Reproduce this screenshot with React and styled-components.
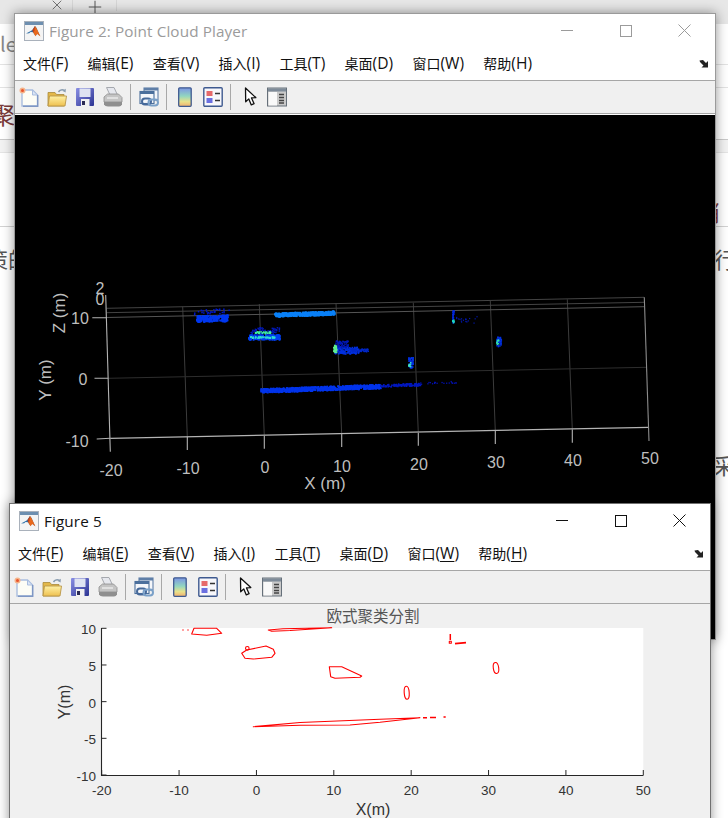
import React from 'react';
import styled, { createGlobalStyle } from 'styled-components';
import { X, Plus } from 'lucide-react';

const GlobalStyle = createGlobalStyle`
  html, body { margin: 0; padding: 0; width: 728px; height: 818px; overflow: hidden; background: #fff; }
  #root { width: 728px; height: 818px; }
`;

const Desktop = styled.div`
  position: relative;
  width: 728px;
  height: 818px;
  overflow: hidden;
  font-family: "Noto Sans CJK SC", "Liberation Sans", sans-serif;
`;

/* ---- the web page behind the figure windows ---- */
const Backdrop = styled.div`
  display: flex;
  flex-direction: column;
  width: 100%;
  height: 100%;
`;
const TabBar = styled.div`
  height: 24px;
  flex: none;
  background: #e7e7e7;
  display: flex;
  align-items: flex-start;
  color: #555;
`;
const TabSlot = styled.div`
  width: ${p => p.$w}px;
  height: 11px;
  display: flex;
  justify-content: ${p => p.$end ? 'flex-end' : 'center'};
  padding-right: ${p => p.$pad || 0}px;
  box-sizing: border-box;
  border-right: 1px solid #d6d6d6;
  svg { margin-top: -3px; flex: none; }
`;
const PageRow = styled.div`
  height: ${p => p.$h}px;
  flex: none;
  display: flex;
  justify-content: space-between;
  align-items: ${p => p.$align || 'center'};
  box-sizing: border-box;
  background: ${p => p.$bg || '#fff'};
  border-bottom: ${p => p.$line ? `1px solid ${p.$line}` : '0'};
  overflow: hidden;
  font-size: ${p => p.$size || 22}px;
  line-height: 1.3;
  color: ${p => p.$color || '#555'};
`;
const Clipped = styled.span`
  margin-left: ${p => p.$ml || 0}px;
  margin-right: ${p => p.$mr || 0}px;
  white-space: nowrap;
`;

/* ---- figure windows ---- */
const Win = styled.section`
  position: absolute;
  left: ${p => p.$x}px;
  top: ${p => p.$y}px;
  width: 702px;
  height: ${p => p.$h}px;
  box-sizing: border-box;
  border: 1px solid ${p => p.$active ? '#707070' : '#9a9a9a'};
  background: #f0f0f0;
  box-shadow: 0 0 11px rgba(0,0,0,.42);
  display: flex;
  flex-direction: column;
  overflow: hidden;
`;
const TitleBar = styled.header`
  height: 33px;
  flex: none;
  display: flex;
  align-items: center;
  background: #fff;
  padding-left: 9px;
`;
const TitleText = styled.span`
  margin-left: 5px;
  font-family: "Open Sans", "Noto Sans", sans-serif;
  font-size: 15.3px;
  letter-spacing: .1px;
  color: ${p => p.$active ? '#111' : '#9b9b9b'};
  flex: 1;
`;
const Caption = styled.button`
  all: unset;
  width: 59px;
  height: 33px;
  display: flex;
  align-items: center;
  justify-content: center;
  flex: none;
  color: ${p => p.$active ? '#111' : '#9b9b9b'};
`;
const Captions = styled.div`
  display: flex;
  margin-right: 1px;
`;
const MenuBar = styled.nav`
  height: 34px;
  flex: none;
  box-sizing: border-box;
  display: flex;
  align-items: center;
  gap: 19.3px;
  padding: 0 6px 2px 8px;
  background: #fff;
  border-bottom: 1px solid #a6a6a6;
  font-size: 14px;
  color: #111;
`;
const MenuItem = styled.span`
  white-space: nowrap;
  display: flex;
  align-items: baseline;
  u { text-underline-offset: 2px; }
`;
const MenuKey = styled.span`
  font-family: "Open Sans", "Noto Sans", sans-serif;
  font-size: 15.6px;
`;
const MenuEnd = styled.span`
  margin-left: auto;
  display: flex;
  margin-top: 2px;
`;
const ToolBar = styled.div`
  height: 33px;
  flex: none;
  box-sizing: border-box;
  display: flex;
  align-items: center;
  background: #f0f0f0;
  border-bottom: 1px solid #a6a6a6;
`;
const ToolSlot = styled.span`
  width: ${p => p.$w || 28}px;
  height: 22px;
  flex: none;
  display: flex;
  align-items: center;
  justify-content: center;
`;
const ToolSep = styled.i`
  width: 1px;
  height: 26px;
  flex: none;
  background: #a8a8a8;
  margin: 0 ${p => p.$after || 4}px 0 3px;
`;
const Canvas = styled.div`
  flex: 1;
  min-height: 0;
  background: ${p => p.$bg};
  border-top: ${p => p.$gap ? '1px solid #fff' : '0'};
`;
const Plot = styled.svg`
  display: block;
  width: 700px;
  height: ${p => p.$h}px;
`;
const Tick3D = styled.text`
  font-family: "Liberation Sans", Arial, sans-serif;
  font-size: ${p => p.$size || 16}px;
  fill: #bebebe;
  text-anchor: middle;
`;
const Tick2D = styled.text`
  font-family: "Liberation Sans", Arial, sans-serif;
  font-size: 13.5px;
  fill: #333;
  text-anchor: ${p => p.$anchor || 'middle'};
`;
const Label2D = styled.text`
  font-family: "Liberation Sans", Arial, sans-serif;
  font-size: 16px;
  fill: #333;
  text-anchor: middle;
`;
const PlotTitle = styled.text`
  font-family: "Noto Sans CJK SC", sans-serif;
  font-size: 15.5px;
  fill: #555;
  text-anchor: middle;
`;

/* ---- drawn icons ---- */
const MatlabLogo = () => (
  <svg width="20" height="20" viewBox="0 0 20 20">
    <rect x=".5" y=".5" width="19" height="19" fill="#f4f4f4" stroke="#a9b1bb" />
    <rect x="1" y="1" width="18" height="3" fill="#6d8fb0" />
    <path d="M2 12.5l4.3-2.3 2-1.2L11 5l1.5 2 3.5 8-3-2.5-1.7 2.3-2.3-3.6-2.4-.2-1.5 1.2z" fill="#2d6fa8" />
    <path d="M11 5l1.6 2.3L16.500 15.500l-3.300-2.500-1.700 2.300L9 11z" fill="#e8681c" />
    <path d="M8.500 9L11 5l-.6 4.700L9 11.500z" fill="#c1401a" />
  </svg>
);
const IconNew = () => (
  <svg width="20" height="20" viewBox="0 0 20 20">
    <path d="M3 3h10.500l5 5v11H3z" fill="#fdfdf6" stroke="#a9bddf" strokeWidth="1.400" />
    <path d="M13.500 3v5h5z" fill="#dbe5f5" stroke="#a9bddf" />
    <path d="M18.700 8v11.300H4" fill="none" stroke="#7f97c4" strokeWidth="1.400" />
    <circle cx="3.500" cy="3.500" r="3" fill="#f5b48a" />
    <circle cx="3.500" cy="3.500" r="1.500" fill="#e8542c" />
  </svg>
);
const IconOpen = () => (
  <svg width="20" height="20" viewBox="0 0 20 20">
    <defs>
      <linearGradient id="fo" x1="0" y1="0" x2="0" y2="1">
        <stop offset="0" stopColor="#fff2a6" /><stop offset="1" stopColor="#eec04f" />
      </linearGradient>
    </defs>
    <path d="M1 5.500h7l1.500 2H17V19H1z" fill="#e3b84a" stroke="#a88a3a" strokeWidth=".8" />
    <path d="M1 19l1.500-10h17L18 19z" fill="url(#fo)" stroke="#b9964a" strokeWidth=".9" />
    <path d="M11.500 5c1.300-2.200 4-2.600 6-1.600" fill="none" stroke="#8a9db0" strokeWidth="1.500" />
    <path d="M18.800 1.800l-.2 3.600-3-1.400z" fill="#8a9db0" />
  </svg>
);
const IconSave = () => (
  <svg width="20" height="20" viewBox="0 0 20 20">
    <defs>
      <linearGradient id="fl" x1="0" y1="0" x2="1" y2="1">
        <stop offset="0" stopColor="#8a8fe4" /><stop offset="1" stopColor="#2b3392" />
      </linearGradient>
    </defs>
    <rect x="1" y="1" width="18" height="18" rx="1" fill="url(#fl)" />
    <rect x="4.500" y="1.500" width="11" height="8.500" fill="#dfe3f2" />
    <rect x="6" y="12" width="8.500" height="7" fill="#f1f1f1" />
    <rect x="7" y="14" width="3" height="4" fill="#2b2b55" />
  </svg>
);
const IconPrint = () => (
  <svg width="20" height="20" viewBox="0 0 20 20">
    <path d="M3.500 .5h7.500l3.500 7.500H7z" fill="#e6e8ee" stroke="#a5a8ae" />
    <path d="M1 10l3.500-3h11l3.500 3.500V15H1z" fill="#c4c4c4" stroke="#8d8d8d" strokeWidth=".8" />
    <path d="M1 15h18v2.500q-1 2-3 2H5q-3 0-4-2z" fill="#8f8f8f" />
    <path d="M4 11h11" stroke="#ededed" strokeWidth="1.400" />
  </svg>
);
const IconLink = () => (
  <svg width="20" height="20" viewBox="0 0 20 20">
    <rect x="5" y="1" width="14" height="12" fill="#f4f6fa" stroke="#5f7fa8" strokeWidth="1.100" />
    <rect x="5" y="1" width="14" height="2.500" fill="#5f7fa8" />
    <rect x="1" y="4.500" width="14" height="12" fill="#f4f6fa" stroke="#4b6f9c" strokeWidth="1.100" />
    <rect x="1" y="4.500" width="14" height="2.500" fill="#4b6f9c" />
    <rect x="3" y="11.500" width="9" height="6" rx="3" fill="none" stroke="#46699a" strokeWidth="2" />
    <rect x="9.500" y="12.500" width="9.500" height="6" rx="3" fill="none" stroke="#7aa0c8" strokeWidth="2" />
  </svg>
);
const IconColorbar = () => (
  <svg width="20" height="20" viewBox="0 0 20 20">
    <defs>
      <linearGradient id="cb" x1="0" y1="0" x2="0" y2="1">
        <stop offset="0" stopColor="#7c94e4" /><stop offset=".45" stopColor="#92d6c0" />
        <stop offset=".75" stopColor="#e9e28a" /><stop offset="1" stopColor="#f0b070" />
      </linearGradient>
    </defs>
    <rect x="3.700" y=".8" width="12.500" height="18.500" rx="1" fill="url(#cb)" stroke="#3f5a90" strokeWidth="1.300" />
  </svg>
);
const IconLegend = () => (
  <svg width="20" height="20" viewBox="0 0 20 20">
    <rect x=".8" y=".8" width="18.400" height="18.400" rx="1" fill="#f7f7fb" stroke="#3f5a90" strokeWidth="1.400" />
    <rect x="3.500" y="4" width="6" height="5" fill="#e6696a" />
    <rect x="3.500" y="11" width="6" height="5" fill="#6a6fe0" />
    <path d="M12 6.500h5M12 13.500h5" stroke="#333" strokeWidth="1.500" />
  </svg>
);
const IconArrow = () => (
  <svg width="20" height="20" viewBox="0 0 20 20">
    <path d="M4.500 1l.2 13.800 3.100-2.900 2.500 6 2.800-1.200-2.600-5.800 4.300-.3z" fill="#fff" stroke="#111" strokeWidth="1.300" strokeLinejoin="round" />
  </svg>
);
const IconPanel = () => (
  <svg width="20" height="20" viewBox="0 0 20 20">
    <rect x=".5" y="1" width="19" height="18" fill="#c9c9c9" stroke="#66707a" />
    <rect x="1" y="1.500" width="18" height="3" fill="#7e8b99" />
    <rect x="1.500" y="5" width="8.500" height="13.500" fill="#f9f9f9" />
    <path d="M12 7.500h5M12 10.500h5M12 13.500h5M12 16h5" stroke="#444" strokeWidth="1.300" />
  </svg>
);
const IconCornerArrow = () => (
  <svg width="10" height="9" viewBox="0 0 10 9">
    <path d="M.5 1.500L4 1l3 3 2-2v6.500H2.500l2-2L1 3z" fill="#222" />
  </svg>
);
const MinGlyph = () => <svg width="12" height="12" viewBox="0 0 12 12"><path d="M0 5.500h12" stroke="currentColor" /></svg>;
const MaxGlyph = () => <svg width="12" height="12" viewBox="0 0 12 12"><rect x=".5" y=".5" width="11" height="11" fill="none" stroke="currentColor" /></svg>;
const CloseGlyph = () => <svg width="13" height="13" viewBox="0 0 13 13"><path d="M.5.500l12 12M12.500.500l-12 12" stroke="currentColor" /></svg>;

/* ---- 3D point cloud ---- */
const rng = seed => () => {
  seed = (seed + 0x6d2b79f5) | 0;
  let t = Math.imul(seed ^ (seed >>> 15), 1 | seed);
  t = (t + Math.imul(t ^ (t >>> 7), 61 | t)) ^ t;
  return ((t ^ (t >>> 14)) >>> 0) / 4294967296;
};
const clusters = [
  { x: 191, y: 310, w: 38, h: 5, n: 30, c: '#0018c8', s: 1.5, sk: -.07 },
  { x: 196, y: 315, w: 31, h: 6, n: 260, c: '#0038f0', s: 1.9, sk: -.02 },
  { x: 274, y: 312.500, w: 60, h: 3.500, n: 420, c: '#0a80f8', s: 1.9, sk: -.035 },
  { x: 248, y: 334, w: 31, h: 5, n: 220, c: '#0040f0', s: 1.800, sk: 0 },
  { x: 250, y: 327, w: 29, h: 7, n: 70, c: '#0018b8', s: 1.500, sk: 0 },
  { x: 254, y: 331, w: 16, h: 2, n: 30, c: '#40f0a0', s: 1.5, sk: 0 },
  { x: 250, y: 336, w: 24, h: 1.500, n: 40, c: '#30e0d0', s: 1.500, sk: 0 },
  { x: 334, y: 346, w: 24, h: 7, n: 170, c: '#0030e0', s: 1.600, sk: .02 },
  { x: 335, y: 340, w: 13, h: 7, n: 60, c: '#0018b8', s: 1.500, sk: 0 },
  { x: 350, y: 348, w: 18, h: 3, n: 50, c: '#0028c8', s: 1.5, sk: 0 },
  { x: 333, y: 344, w: 3, h: 7, n: 30, c: '#60f090', s: 1.600, sk: .5 },
  { x: 260, y: 388, w: 120, h: 4, n: 750, c: '#0034ec', s: 1.800, sk: -.036 },
  { x: 380, y: 384, w: 40, h: 2.500, n: 110, c: '#0018c0', s: 1.500, sk: -.036 },
  { x: 420, y: 382, w: 38, h: 2, n: 20, c: '#0010b0', s: 1.300, sk: -.036 },
  { x: 408, y: 357, w: 4.500, h: 10, n: 50, c: '#0030e0', s: 1.600, sk: 0 },
  { x: 408, y: 362, w: 2, h: 4, n: 10, c: '#40e0c0', s: 1.500, sk: 0 },
  { x: 452, y: 310, w: 1.500, h: 13, n: 24, c: '#0028e0', s: 1.500, sk: 0 },
  { x: 452, y: 319, w: 1.500, h: 3, n: 5, c: '#20e0c0', s: 1.500, sk: 0 },
  { x: 456, y: 316, w: 25, h: 7, n: 18, c: '#0018b0', s: 1.200, sk: 0 },
  { x: 496, y: 336, w: 5, h: 10, n: 40, c: '#0030e0', s: 1.500, sk: 0 },
  { x: 496, y: 339, w: 2, h: 5, n: 10, c: '#30e0b0', s: 1.500, sk: 0 },
];
const cloudDots = clusters.flatMap((c, i) => {
  const r = rng(i * 97 + 11);
  return Array.from({ length: c.n }, () => {
    const x = c.x + r() * c.w;
    const y = c.y + r() * c.h + (x - c.x) * c.sk;
    return { x, y, s: c.s, c: c.c };
  });
});

const PointCloud = () => (
  <Plot $h={525} viewBox="15 115 700 525">
    <g stroke="#3c3c3c" strokeWidth="1" fill="none">
      <path d="M182.700 306.700L187.300 437M259.300 304L264.300 436M336 303L341.700 434M413.300 302.700L418.300 433M490.300 300.700L495.300 431M567.300 299.300L572.300 429.500" />
      <path d="M108.300 378.300L646.700 367.300" stroke="#2e2e2e" />
      <path d="M106.700 308.300L644 297.300M106.700 312.700L644 302.300" stroke="#444" />
      <path d="M106 317.500L644 306.700" stroke="#555" />
    </g>
    <g stroke="#b4b4b4" strokeWidth="1.100" fill="none">
      <path d="M105.700 295L110.300 451.700" />
      <path d="M110.300 438.300L648.300 427.300" strokeWidth="1.300" />
      <path d="M644.300 297.300L649 441" stroke="#8c8c8c" />
      <path d="M187.300 436.700V450M264.300 436V448.700M341.700 434V447M418.300 433V445.700M495.300 431V444M572.300 429.500V442.700" />
      <path d="M92.300 317.700H106.700M94.500 378.300H108.300M96.700 439L110.300 438.300" />
    </g>
    {cloudDots.map((d, i) => <rect key={i} x={d.x} y={d.y} width={d.s} height={d.s} fill={d.c} />)}
    <Tick3D x="100" y="294">2</Tick3D>
    <Tick3D x="100" y="305">0</Tick3D>
    <Tick3D x="80" y="324">10</Tick3D>
    <Tick3D x="83" y="385">0</Tick3D>
    <Tick3D x="77" y="447">-10</Tick3D>
    <Tick3D x="111" y="476">-20</Tick3D>
    <Tick3D x="188" y="474">-10</Tick3D>
    <Tick3D x="265" y="473">0</Tick3D>
    <Tick3D x="342" y="472">10</Tick3D>
    <Tick3D x="419" y="470">20</Tick3D>
    <Tick3D x="496" y="468">30</Tick3D>
    <Tick3D x="573" y="466">40</Tick3D>
    <Tick3D x="650" y="464">50</Tick3D>
    <Tick3D x="325" y="489" $size={17}>X (m)</Tick3D>
    <Tick3D transform="translate(65 313) rotate(-90)" $size={17}>Z (m)</Tick3D>
    <Tick3D transform="translate(51 380) rotate(-90)" $size={17}>Y (m)</Tick3D>
  </Plot>
);

/* ---- 2D segmentation plot ---- */
const xTicks = [-20, -10, 0, 10, 20, 30, 40, 50];
const yTicks = [10, 5, 0, -5, -10];
const px = v => 101.7 + (v + 20) * 7.737;
const py = v => 628.3 + (10 - v) * 7.335;

const Segmentation = () => (
  <Plot $h={214} viewBox="10 604 700 214">
    <PlotTitle x="373" y="622">欧式聚类分割</PlotTitle>
    <rect x="101.700" y="628" width="541.600" height="147" fill="#fff" />
    <g stroke="#262626" fill="none">
      <path d="M101.500 628V775.500H643.500" strokeWidth="1.100" />
      {xTicks.map(t => <path key={t} d={`M${px(t)} 775V770`} />)}
      {yTicks.map(t => <path key={t} d={`M101.500 ${py(t)}H106.500`} />)}
    </g>
    {xTicks.map(t => <Tick2D key={t} x={px(t)} y="795">{t}</Tick2D>)}
    {yTicks.map(t => <Tick2D key={t} x="96" y={py(t) + 6} $anchor="end">{t}</Tick2D>)}
    <Label2D x="373" y="815">X(m)</Label2D>
    <Label2D transform="translate(70 702) rotate(-90)">Y(m)</Label2D>
    <g fill="none" stroke="#f00" strokeWidth="1.100" strokeLinejoin="round">
      <path d="M194 628.300H216.700L221.700 633.300L206.700 635.300L191.700 634Z" />
      <path d="M268.300 630L283 628.700L331.700 627.700L290 630.500L271.700 631.300Z" />
      <path d="M241.700 653.300L246.700 650L266 646L273.300 649.300L275 653.300L271.700 657.300L253.300 659L245 658.300Z" />
      <circle cx="247.300" cy="648.300" r="1.800" />
      <path d="M329.300 666.700H341.700L361.700 676L360 677.300L335 678.300L330.700 676.700Z" />
      <path d="M253.300 726.700L300 722.500L380 719.300L420 717.700L380 722.300L350 725L300 725.300Z" />
      <path d="M423 717.700H427M430 717.500H436M443.500 717H445.700" strokeWidth="1.600" />
      <ellipse cx="496" cy="668" rx="2.700" ry="5.500" transform="rotate(-8 496 668)" />
      <ellipse cx="406.700" cy="692.700" rx="2.500" ry="6.500" transform="rotate(-4 406.700 692.700)" />
      <path d="M450.300 634V640" strokeWidth="1.500" />
      <rect x="449.300" y="641.300" width="2" height="2" />
      <path d="M455 643.700L466 642.700" strokeWidth="1.800" />
    </g>
    <circle cx="183" cy="630" r=".7" fill="#f00" />
    <circle cx="188" cy="630" r=".7" fill="#f00" />
  </Plot>
);

/* ---- shared chrome ---- */
const menus = [['文件', 'F'], ['编辑', 'E'], ['查看', 'V'], ['插入', 'I'], ['工具', 'T'], ['桌面', 'D'], ['窗口', 'W'], ['帮助', 'H']];

const FigureWindow = ({ x, y, h, title, active, bg, gap, children }) => (
  <Win $x={x} $y={y} $h={h} $active={active}>
    <TitleBar>
      <MatlabLogo />
      <TitleText $active={active}>{title}</TitleText>
      <Captions>
        <Caption $active={active}><MinGlyph /></Caption>
        <Caption $active={active}><MaxGlyph /></Caption>
        <Caption $active={active}><CloseGlyph /></Caption>
      </Captions>
    </TitleBar>
    <MenuBar>
      {menus.map(([zh, k]) => (
        <MenuItem key={k}>{zh}<MenuKey>({active ? <u>{k}</u> : k})</MenuKey></MenuItem>
      ))}
      <MenuEnd><IconCornerArrow /></MenuEnd>
    </MenuBar>
    <ToolBar>
      <ToolSlot><IconNew /></ToolSlot>
      <ToolSlot><IconOpen /></ToolSlot>
      <ToolSlot><IconSave /></ToolSlot>
      <ToolSlot><IconPrint /></ToolSlot>
      <ToolSep />
      <ToolSlot><IconLink /></ToolSlot>
      <ToolSep />
      <ToolSlot><IconColorbar /></ToolSlot>
      <ToolSlot><IconLegend /></ToolSlot>
      <ToolSep $after={7} />
      <ToolSlot $w={26}><IconArrow /></ToolSlot>
      <ToolSlot $w={26}><IconPanel /></ToolSlot>
    </ToolBar>
    <Canvas $bg={bg} $gap={gap}>{children}</Canvas>
  </Win>
);

export default function App() {
  return (
    <Desktop>
      <GlobalStyle />
      <Backdrop>
        <TabBar>
          <TabSlot $w={73} $end $pad={7}><X size={16} strokeWidth={1.2} /></TabSlot>
          <TabSlot $w={44}><Plus size={20} strokeWidth={1.2} /></TabSlot>
        </TabBar>
        <PageRow $h={41} $size={20} $line="#e3e3e3" $color="#888"><Clipped>le</Clipped></PageRow>
        <PageRow $h={23} $line="#e3e3e3" />
        <PageRow $h={52} $size={24} $line="#c9c9c9" $color="#7b3b3b"><Clipped $ml={-9}>聚</Clipped></PageRow>
        <PageRow $h={13} $bg="#f2f2f2" $line="#e4e4e4" />
        <PageRow $h={74} $line="#d2d2d2" $align="flex-end" $color="#7b3b3b">
          <span />
          <Clipped $mr={8}>消</Clipped>
        </PageRow>
        <PageRow $h={62}>
          <Clipped $ml={-14}>策的</Clipped>
          <Clipped $mr={-8}>行</Clipped>
        </PageRow>
        <PageRow $h={190} $align="flex-end">
          <span />
          <Clipped $mr={-7}>采</Clipped>
        </PageRow>
      </Backdrop>
      <FigureWindow x={14} y={13} h={627} title="Figure 2: Point Cloud Player" bg="#000" gap>
        <PointCloud />
      </FigureWindow>
      <FigureWindow x={9} y={503} h={330} title="Figure 5" active bg="#f0f0f0">
        <Segmentation />
      </FigureWindow>
    </Desktop>
  );
}
